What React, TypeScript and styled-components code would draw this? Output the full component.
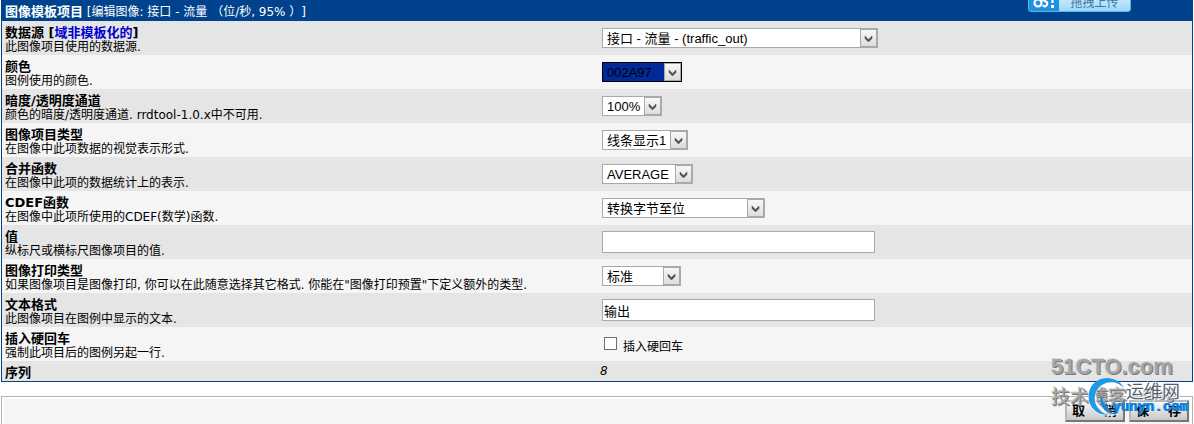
import React from "react";
import styled, { createGlobalStyle } from "styled-components";

const uiFont = `"DejaVu Sans", "Noto Sans CJK SC", sans-serif`;
const fieldFont = `"Liberation Sans", "Noto Sans CJK SC", sans-serif`;

const GlobalStyle = createGlobalStyle`
  * { box-sizing: border-box; }
  body { margin: 0; background: #fff; color: #000; font: 12px/14px ${uiFont}; text-spacing-trim: space-all; overflow: hidden; }
`;

const Page = styled.main`
  position: relative;
  padding: 0 1px;
`;

const Panel = styled.section`
  border: 1px solid #00438c;
  border-top: 0;
`;

const PanelHeader = styled.header`
  height: 21px;
  padding: 5px 3px 2px;
  background: #00438c;
  color: #fff;
  white-space: nowrap;
`;

const PanelTitle = styled.h1`
  display: inline;
  margin: 0;
  font-size: 13px;
  line-height: 14px;
`;

const Row = styled.div<{ $short?: boolean }>`
  display: grid;
  grid-template-columns: 1fr 1fr;
  min-height: ${(p) => (p.$short ? 20 : 34)}px;
  background: #f5f5f5;
  &:nth-child(even) { background: #e5e5e5; }
`;

const Description = styled.div`
  padding: 5px 3px 0;
  white-space: nowrap;
`;

const FieldName = styled.label`
  display: block;
  font-size: 13px;
  line-height: 14px;
  font-weight: bold;
`;

const TemplateLink = styled.a`
  color: #0000d0;
  text-decoration: none;
`;

const Help = styled.div`
  line-height: 14px;
`;

const Control = styled.div`
  display: flex;
  align-items: center;
  padding-left: 5px;
`;

const SelectBox = styled.div<{ $width: number }>`
  position: relative;
  width: ${(p) => p.$width}px;
  height: 20px;
`;

const NativeSelect = styled.select<{ $swatch?: string }>`
  appearance: none;
  display: block;
  width: 100%;
  height: 20px;
  margin: 0;
  padding: 1px 18px 0 4px;
  border: 1px solid ${(p) => (p.$swatch ? "#000" : "#a9a9a9")};
  border-radius: 0;
  background: ${(p) => p.$swatch ?? "#fff"};
  color: #000;
  opacity: 1;
  font: 13px/17px ${fieldFont};
`;

const ArrowFace = styled.svg`
  position: absolute;
  top: 1px;
  right: 1px;
  pointer-events: none;
`;

const TextInput = styled.input`
  width: 273px;
  height: 22px;
  padding: 0 1px;
  border: 1px solid #a9a9a9;
  background: #fff;
  font: 13px/20px ${fieldFont};
`;

const CheckLabel = styled.label`
  display: flex;
  align-items: center;
  gap: 6px;
  padding: 3px 0 0 2px;
`;

const Checkbox = styled.input`
  appearance: none;
  width: 13px;
  height: 13px;
  margin: 0 0 4px;
  border: 1px solid #707070;
  background: #fff;
  &:checked { background: #00438c; }
`;

const CheckText = styled.span`
  padding-top: 2px;
`;

const Sequence = styled.em`
  margin-left: -2px;
`;

const ActionBar = styled.footer`
  margin-top: 14px;
  padding: 2px 2px 0;
  border: 1px solid #b4b4b4;
  border-bottom: 0;
`;

const Actions = styled.div`
  display: flex;
  justify-content: flex-end;
  gap: 4px;
  padding: 1px 1px 3px;
  background: #f5f5f5;
`;

const ActionButton = styled.button`
  display: flex;
  justify-content: space-between;
  align-items: center;
  width: 60px;
  height: 22px;
  padding: 0 6px 0 5px;
  border: 2px solid;
  border-color: #b8b8b8 #777 #777 #b8b8b8;
  background: linear-gradient(#f8f8f8, #c8c8c8);
  color: #000;
  font: bold 13px/18px ${fieldFont};
`;

const UploadButton = styled.button`
  position: absolute;
  top: -12px;
  right: 63px;
  display: flex;
  width: 103px;
  height: 24px;
  padding: 0;
  border: 1px solid #5cb4e8;
  border-radius: 3px;
  overflow: hidden;
  background: linear-gradient(#e4f6ff, #9cd8fa);
  color: #3f759f;
  font: 12px/28px ${uiFont};
`;

const UploadText = styled.span`
  flex: 1;
  text-align: center;
`;

const BlogMark = styled.div`
  position: absolute;
  top: 351px;
  right: 13px;
  width: 130px;
  color: #a5a5a5;
  pointer-events: none;
  text-shadow: 1px 1px 0 #777, -1px -1px 0 #ddd;
  white-space: nowrap;
`;

const BlogName = styled.div`
  font: bold 22px/32px "Liberation Sans", sans-serif;
`;

const BlogSection = styled.div`
  display: flex;
  gap: 16px;
  font: 19px/26px "Noto Sans CJK SC", sans-serif;
`;

const BlogWord = styled.span`
  font: bold 14px/22px "Liberation Sans", sans-serif;
`;

const SiteMark = styled.div`
  position: absolute;
  top: 377px;
  right: 4px;
  width: 102px;
  height: 42px;
  pointer-events: none;
`;

const Swirl = styled.svg`
  position: absolute;
  inset: 0 auto auto 0;
`;

const SiteText = styled.div`
  position: relative;
  padding: 3px 0 0 24px;
  white-space: nowrap;
`;

const SiteName = styled.div`
  padding-left: 14px;
  color: #53616f;
  font: 18px/20px "Noto Sans CJK SC", sans-serif;
  text-shadow: 1px 1px 0 #fff, -1px -1px 0 #fff;
`;

const SiteDomain = styled.div`
  color: #0a7ce0;
  font: bold 14px/14px "Liberation Mono", monospace;
  text-shadow: 1px 0 0 #1b9be6;
`;

interface PickProps {
  id: string;
  width: number;
  value: string;
  swatch?: string;
}

function Pick({ id, width, value, swatch }: PickProps) {
  return (
    <SelectBox $width={width}>
      <NativeSelect id={id} $swatch={swatch} defaultValue={value}>
        <option>{value}</option>
      </NativeSelect>
      <ArrowFace width="17" height="18" viewBox="0 0 17 18" aria-hidden="true">
        <defs>
          <linearGradient id={`${id}-face`} x2="0" y2="1">
            <stop stopColor="#f8f8f8" />
            <stop offset="1" stopColor="#dcdcdc" />
          </linearGradient>
        </defs>
        <rect x=".5" y=".5" width="16" height="17" fill={`url(#${id}-face)`} stroke="#a9a9a9" />
        <path d="M5 7l3.5 3.5L12 7v2.5L8.5 13 5 9.5z" fill="#505050" stroke="#505050" strokeWidth=".5" />
      </ArrowFace>
    </SelectBox>
  );
}

interface Field {
  id: string;
  name: string;
  link?: string;
  help: string;
  control: React.ReactNode;
}

const fields: Field[] = [
  { id: "source", name: "数据源", link: "域非模板化的", help: "此图像项目使用的数据源.", control: <Pick id="source" width={276} value="接口 - 流量 - (traffic_out)" /> },
  { id: "color", name: "颜色", help: "图例使用的颜色.", control: <Pick id="color" width={80} value="002A97" swatch="#002a97" /> },
  { id: "alpha", name: "暗度/透明度通道", help: "颜色的暗度/透明度通道. rrdtool-1.0.x中不可用.", control: <Pick id="alpha" width={60} value="100%" /> },
  { id: "type", name: "图像项目类型", help: "在图像中此项数据的视觉表示形式.", control: <Pick id="type" width={86} value="线条显示1" /> },
  { id: "merge", name: "合并函数", help: "在图像中此项的数据统计上的表示.", control: <Pick id="merge" width={91} value="AVERAGE" /> },
  { id: "cdef", name: "CDEF函数", help: "在图像中此项所使用的CDEF(数学)函数.", control: <Pick id="cdef" width={163} value="转换字节至位" /> },
  { id: "value", name: "值", help: "纵标尺或横标尺图像项目的值.", control: <TextInput id="value" type="text" /> },
  { id: "gprint", name: "图像打印类型", help: "如果图像项目是图像打印, 你可以在此随意选择其它格式. 你能在\"图像打印预置\"下定义额外的类型.", control: <Pick id="gprint" width={79} value="标准" /> },
  { id: "text", name: "文本格式", help: "此图像项目在图例中显示的文本.", control: <TextInput id="text" type="text" defaultValue="输出" /> },
  {
    id: "return",
    name: "插入硬回车",
    help: "强制此项目后的图例另起一行.",
    control: (
      <CheckLabel>
        <Checkbox id="return" type="checkbox" />
        <CheckText>插入硬回车</CheckText>
      </CheckLabel>
    ),
  },
];

export default function App() {
  return (
    <Page>
      <GlobalStyle />
      <Panel>
        <PanelHeader>
          <PanelTitle>图像模板项目</PanelTitle> [编辑图像: 接口 - 流量 （位/秒, 95% ）]
        </PanelHeader>
        {fields.map((f) => (
          <Row key={f.id}>
            <Description>
              <FieldName htmlFor={f.id}>
                {f.name}
                {f.link && <> [<TemplateLink href="#">{f.link}</TemplateLink>]</>}
              </FieldName>
              <Help>{f.help}</Help>
            </Description>
            <Control>{f.control}</Control>
          </Row>
        ))}
        <Row $short>
          <Description>
            <FieldName as="div">序列</FieldName>
          </Description>
          <Control>
            <Sequence>8</Sequence>
          </Control>
        </Row>
      </Panel>

      <ActionBar>
        <Actions>
          <ActionButton type="button"><span>取</span><span>消</span></ActionButton>
          <ActionButton type="submit"><span>保</span><span>存</span></ActionButton>
        </Actions>
      </ActionBar>

      <UploadButton type="button">
        <svg width="30" height="22" viewBox="0 0 30 22" aria-hidden="true">
          <rect width="30" height="22" fill="#1e94e0" />
          <g fill="none" stroke="#fff" strokeWidth="2.2">
            <circle cx="9" cy="14" r="3.5" />
            <path d="M11 11l9-4M10 9l6 3q4 2 1 5-2 1-3-1" />
            <path d="M23.500 8v6" />
          </g>
          <rect x="22" y="16" width="3" height="3" fill="#fff" />
        </svg>
        <UploadText>拖拽上传</UploadText>
      </UploadButton>

      <BlogMark>
        <BlogName>51CTO.com</BlogName>
        <BlogSection>技术博客<BlogWord>Blog</BlogWord></BlogSection>
      </BlogMark>
      <SiteMark>
        <Swirl width="40" height="42" viewBox="0 0 40 42" aria-hidden="true">
          <path d="M36 12C31-1 12-3 3 10-5 24 5 39 21 39 28 39 31 37 31 37 18 37 6 28 8 17 11 4 28 2 36 12z" fill="#fff" opacity=".7" />
          <path d="M36 11C30-1 11-3 3 10-4 24 5 38 19 38 9 33 4 24 8 15 13 4 28 2 36 11z" fill="#1b9be6" />
          <path d="M13 18c-3 9 3 18 13 19-5-3-8-9-7-15-1 3-1 6 0 8-3-3-5-7-6-12z" fill="#1b86d6" />
        </Swirl>
        <SiteText>
          <SiteName>运维网</SiteName>
          <SiteDomain>yunyn.com</SiteDomain>
        </SiteText>
      </SiteMark>
    </Page>
  );
}
